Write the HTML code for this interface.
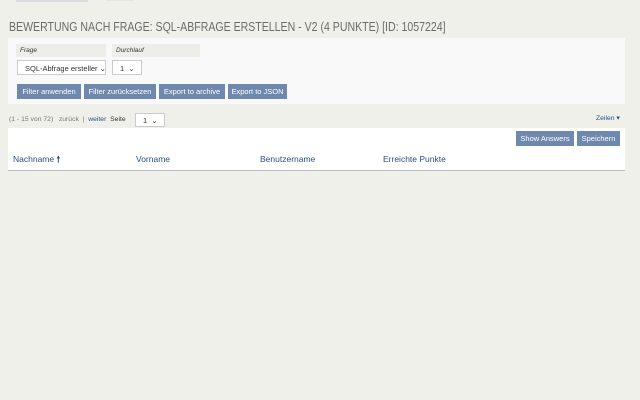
<!DOCTYPE html>
<html><head><meta charset="utf-8"><style>
*{box-sizing:border-box;margin:0;padding:0}
body{width:640px;height:400px;background:#f0f0eb;font-family:"Liberation Sans",sans-serif;position:relative;overflow:hidden;color:#333}
.abs{position:absolute}
h1{position:absolute;left:9px;top:20px;font-size:12.5px;font-weight:normal;color:#6b6b6b;white-space:nowrap;transform:scaleX(0.845);transform-origin:0 0}
.panel{position:absolute;background:#f9f9fa}
.lbl{position:absolute;background:#ededea;height:13px;font-size:6.5px;font-style:italic;padding:3px 0 0 4px;color:#333}
.sel{position:absolute;background:#fff;border:1px solid #ccc;height:15px;font-size:7.5px;padding:3px 0 0 7px;color:#333;white-space:nowrap;overflow:hidden}
.btn{position:absolute;background:#6f88ae;color:#fff;font-size:7.5px;height:15px;padding:3px 0 0;text-align:center;white-space:nowrap}
.sm{font-size:6.8px;color:#777;white-space:nowrap}
.th{position:absolute;top:154px;font-size:8.5px;color:#2c4f7e}
</style></head><body>
<div class="abs" style="left:16px;top:0;width:72px;height:2px;background:#d8dbe0"></div>
<div class="abs" style="left:106px;top:0;width:28px;height:1px;background:#e4e4e0"></div>
<h1>BEWERTUNG NACH FRAGE: SQL-ABFRAGE ERSTELLEN - V2 (4 PUNKTE) [ID: 1057224]</h1>
<div class="panel" style="left:8px;top:38px;width:617px;height:66px"></div>
<div class="lbl" style="left:16px;top:44px;width:90px">Frage</div>
<div class="lbl" style="left:112px;top:44px;width:88px">Durchlauf</div>
<div class="sel" style="left:17px;top:60px;width:89px">SQL-Abfrage ersteller ⌄</div>
<div class="sel" style="left:112px;top:60px;width:30px">1 &nbsp;⌄</div>
<div class="btn" style="left:17px;top:84px;width:64px">Filter anwenden</div>
<div class="btn" style="left:84px;top:84px;width:72px">Filter zurücksetzen</div>
<div class="btn" style="left:159px;top:84px;width:66px">Export to archive</div>
<div class="btn" style="left:228px;top:84px;width:59px">Export to JSON</div>
<div class="abs sm" style="left:9px;top:116px">(1 - 15 von 72) &nbsp; zurück &nbsp;| &nbsp;<span style="color:#2c4f7e">weiter</span> &nbsp;<span style="color:#333">Seite</span></div>
<div class="sel" style="left:135px;top:113px;width:30px;height:14px;padding-top:2px">1 &nbsp;⌄</div>
<div class="abs sm" style="left:596px;top:114px;color:#2c4f7e">Zeilen ▾</div>
<div class="panel" style="left:8px;top:128px;width:617px;height:43px;background:#fff;border-bottom:1px solid #bbb"></div>
<div class="btn" style="left:516px;top:131px;width:58px;padding-top:3px">Show Answers</div>
<div class="btn" style="left:577px;top:131px;width:43px;padding-top:3px">Speichern</div>
<div class="th" style="left:13px">Nachname <b>🠕</b></div>
<div class="th" style="left:136px">Vorname</div>
<div class="th" style="left:260px">Benutzername</div>
<div class="th" style="left:383px">Erreichte Punkte</div>
</body></html>
